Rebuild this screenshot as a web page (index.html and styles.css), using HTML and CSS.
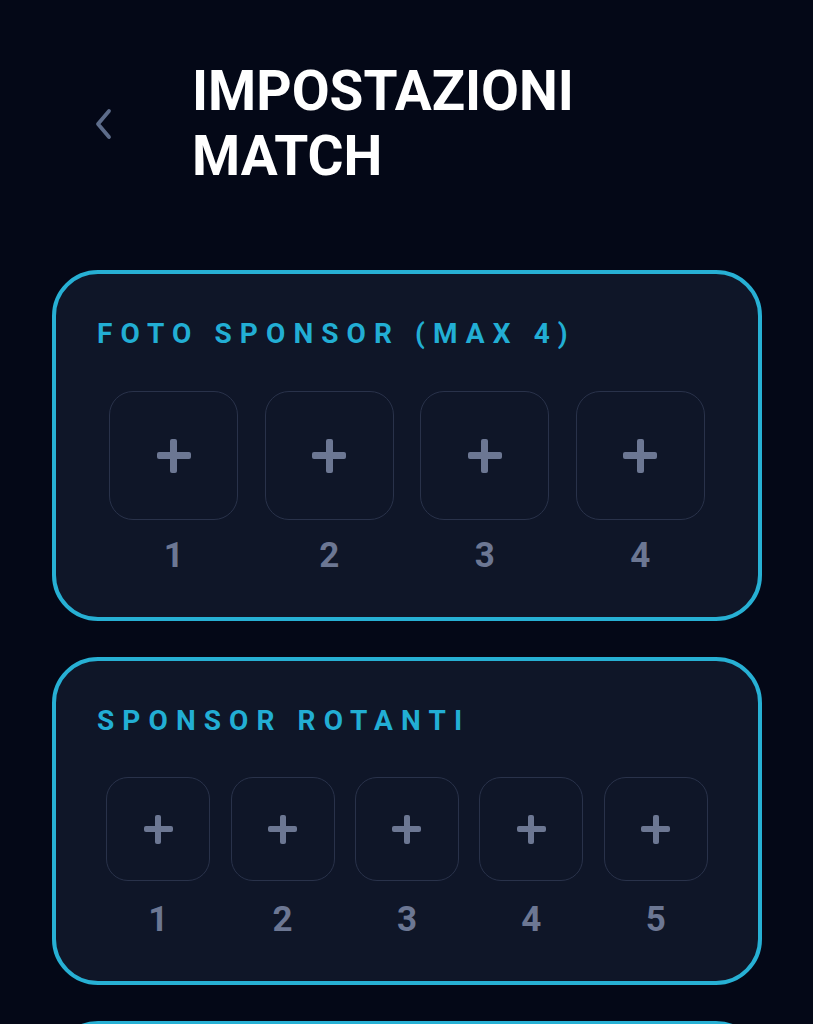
FILE: index.html
```html
<!DOCTYPE html>
<html lang="it">
<head>
<meta charset="utf-8">
<title>Impostazioni Match</title>
<link rel="stylesheet" href="styles.css">
</head>
<body>
<div class="page">
  <header class="header">
    <button class="back" aria-label="Indietro">
      <svg width="20" height="32" viewBox="0 0 20 32"><polyline points="15,3 4,16 15,29" fill="none" stroke="#5d6c8a" stroke-width="3.8" stroke-linecap="round" stroke-linejoin="round"/></svg>
    </button>
    <h1 class="title">IMPOSTAZIONI<br>MATCH</h1>
  </header>

  <section class="card">
    <h2 class="card-label">FOTO SPONSOR (MAX 4)</h2>
    <div class="slots slots-4">
      <div class="slot"><div class="box box-lg"><span class="plus plus-lg"></span></div><span class="num">1</span></div>
      <div class="slot"><div class="box box-lg"><span class="plus plus-lg"></span></div><span class="num">2</span></div>
      <div class="slot"><div class="box box-lg"><span class="plus plus-lg"></span></div><span class="num">3</span></div>
      <div class="slot"><div class="box box-lg"><span class="plus plus-lg"></span></div><span class="num">4</span></div>
    </div>
  </section>

  <section class="card card-2">
    <h2 class="card-label">SPONSOR ROTANTI</h2>
    <div class="slots slots-5">
      <div class="slot"><div class="box box-sm"><span class="plus plus-sm"></span></div><span class="num">1</span></div>
      <div class="slot"><div class="box box-sm"><span class="plus plus-sm"></span></div><span class="num">2</span></div>
      <div class="slot"><div class="box box-sm"><span class="plus plus-sm"></span></div><span class="num">3</span></div>
      <div class="slot"><div class="box box-sm"><span class="plus plus-sm"></span></div><span class="num">4</span></div>
      <div class="slot"><div class="box box-sm"><span class="plus plus-sm"></span></div><span class="num">5</span></div>
    </div>
  </section>

  <section class="card card-3"></section>
</div>
</body>
</html>
```

FILE: styles.css
```css
html, body {
  margin: 0;
  padding: 0;
  background: #040817;
  height: 100%;
  overflow: hidden;
}
body {
  font-family: Roboto, "Liberation Sans", sans-serif;
  color: #ffffff;
}
.page {
  padding: 59px 51px 0 52px;
}
.header {
  display: flex;
  align-items: center;
  height: 130px;
  margin-bottom: 81px;
}
.back {
  background: none;
  border: 0;
  padding: 0;
  margin: 0 0 0 42px;
  width: 20px;
  height: 32px;
  display: flex;
}
.title {
  margin: 0 0 0 78px;
  font-size: 55px;
  line-height: 65px;
  font-weight: 700;
  letter-spacing: 0;
  color: #ffffff;
}
.card {
  background: #0f1628;
  border: 4px solid #27b0d4;
  border-radius: 46px;
  padding: 43px 40px 41px 40px;
  margin-bottom: 36px;
}
.card-label {
  margin: 0 0 40px 1px;
  font-size: 28px;
  line-height: 34px;
  font-weight: 700;
  letter-spacing: 8.1px;
  color: #22aed4;
  white-space: nowrap;
}
.card-2 .card-label {
  margin-bottom: 39px;
}
.slots {
  display: grid;
}
.slots-4 { grid-template-columns: repeat(4, 1fr); }
.slots-5 { grid-template-columns: repeat(5, 1fr); }
.slot {
  display: flex;
  flex-direction: column;
  align-items: center;
}
.box {
  box-sizing: border-box;
  border: 1.5px solid #29324a;
  background: #0f1628;
  display: flex;
  align-items: center;
  justify-content: center;
}
.box-lg {
  width: 129px;
  height: 129px;
  border-radius: 24px;
}
.box-sm {
  width: 104px;
  height: 104px;
  border-radius: 22px;
}
.plus {
  position: relative;
  display: block;
}
.plus::before, .plus::after {
  content: "";
  position: absolute;
  background: #6c7793;
  border-radius: 2px;
}
.plus-lg { width: 34px; height: 34px; }
.plus-lg::before { left: 0; right: 0; top: 13.5px; height: 7px; }
.plus-lg::after { top: 0; bottom: 0; left: 13.5px; width: 7px; }
.plus-sm { width: 29px; height: 29px; }
.plus-sm::before { left: 0; right: 0; top: 11.5px; height: 6px; }
.plus-sm::after { top: 0; bottom: 0; left: 11.5px; width: 6px; }
.num {
  margin-top: 15px;
  font-size: 35px;
  line-height: 41px;
  font-weight: 700;
  color: #6c7793;
}
.slots-5 .num {
  margin-top: 18px;
}
.card-3 {
  height: 200px;
}
```
